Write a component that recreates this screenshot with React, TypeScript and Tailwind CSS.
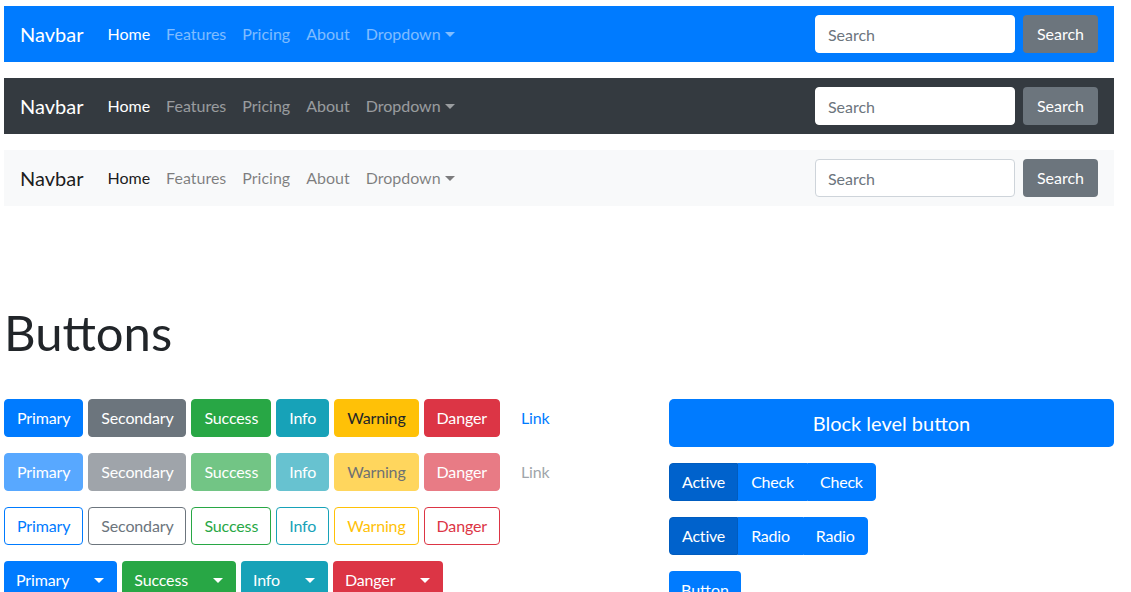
import React from "react"

type NavVariant = {
  bg: string
  brand: string
  link: string
  active: string
  input: string
}

const navVariants: NavVariant[] = [
  { bg: "bg-[#007bff]", brand: "text-white", link: "text-white/50", active: "text-white", input: "border-white" },
  { bg: "bg-[#343a40]", brand: "text-white", link: "text-white/50", active: "text-white", input: "border-white" },
  { bg: "bg-[#f8f9fa]", brand: "text-black/90", link: "text-black/50", active: "text-black/90", input: "border-[#ced4da]" },
]

function Caret({ className = "" }: { className?: string }) {
  return (
    <span
      className={
        "inline-block w-0 h-0 border-t-[5px] border-x-[5px] border-b-0 border-x-transparent border-t-current align-middle " +
        className
      }
    />
  )
}

function Navbar({ v }: { v: NavVariant }) {
  const links = ["Features", "Pricing", "About"]
  return (
    <nav className={"flex items-center h-[56px] px-4 " + v.bg}>
      <a className={"text-[20px] leading-[30px] mr-4 " + v.brand}>Navbar</a>
      <ul className="flex items-center">
        <li className={"px-2 py-2 leading-6 " + v.active}>Home</li>
        {links.map(l => (
          <li key={l} className={"px-2 py-2 leading-6 " + v.link}>{l}</li>
        ))}
        <li className={"px-2 py-2 leading-6 flex items-center " + v.link}>
          Dropdown
          <Caret className="ml-[4px]" />
        </li>
      </ul>
      <form className="ml-auto flex items-center">
        <input
          placeholder="Search"
          className={"w-[200px] h-[38px] rounded-[4px] border bg-white px-3 text-base text-[#495057] placeholder:text-[#6c757d] outline-none " + v.input}
        />
        <button type="button" className="ml-2 h-[38px] px-[14px] rounded-[4px] bg-[#6c757d] text-white leading-6">
          Search
        </button>
      </form>
    </nav>
  )
}

const solid = [
  { label: "Primary", cls: "bg-[#007bff] border-[#007bff] text-white" },
  { label: "Secondary", cls: "bg-[#6c757d] border-[#6c757d] text-white" },
  { label: "Success", cls: "bg-[#28a745] border-[#28a745] text-white" },
  { label: "Info", cls: "bg-[#17a2b8] border-[#17a2b8] text-white" },
  { label: "Warning", cls: "bg-[#ffc107] border-[#ffc107] text-[#212529]" },
  { label: "Danger", cls: "bg-[#dc3545] border-[#dc3545] text-white" },
]

const outline = [
  { label: "Primary", cls: "border-[#007bff] text-[#007bff]" },
  { label: "Secondary", cls: "border-[#6c757d] text-[#6c757d]" },
  { label: "Success", cls: "border-[#28a745] text-[#28a745]" },
  { label: "Info", cls: "border-[#17a2b8] text-[#17a2b8]" },
  { label: "Warning", cls: "border-[#ffc107] text-[#ffc107]" },
  { label: "Danger", cls: "border-[#dc3545] text-[#dc3545]" },
]

const split = [
  { label: "Primary", cls: "bg-[#007bff] text-white" },
  { label: "Success", cls: "bg-[#28a745] text-white" },
  { label: "Info", cls: "bg-[#17a2b8] text-white" },
  { label: "Danger", cls: "bg-[#dc3545] text-white" },
]

const btn = "h-[38px] px-3 border rounded-[4px] leading-6 flex items-center"

function Group({ items }: { items: string[] }) {
  return (
    <div className="flex tracking-[-0.2px]">
      {items.map((t, i) => (
        <span
          key={i}
          className={
            "h-[38px] px-3 flex items-center text-white border " +
            (i === 0 ? "rounded-l-[4px] bg-[#0062cc] border-[#005cbf]" : "bg-[#007bff] border-[#007bff]") +
            (i === items.length - 1 ? " rounded-r-[4px]" : "")
          }
        >
          {t}
        </span>
      ))}
    </div>
  )
}

export default function App() {
  return (
    <div className="min-h-screen bg-white font-['Lato',sans-serif] text-base text-[#212529] overflow-hidden">
      <div className="ml-[4px] w-[1110px] pt-[6px]">
        <div className="flex flex-col gap-4">
          {navVariants.map((v, i) => (
            <Navbar key={i} v={v} />
          ))}
        </div>

        <h1 className="mt-[97px] mb-[38px] text-[49px] leading-[58px] font-normal">Buttons</h1>

        <div className="flex">
          {/* left column */}
          <div className="w-[665px] flex flex-col gap-4 tracking-[-0.15px]">
            <div className="flex gap-[5px]">
              {solid.map(b => (
                <span key={b.label} className={btn + " " + b.cls}>{b.label}</span>
              ))}
              <span className="h-[38px] px-3 flex items-center text-[#007bff] ml-[4px]">Link</span>
            </div>
            <div className="flex gap-[5px]">
              {solid.map(b => (
                <span key={b.label} className={btn + " opacity-65 " + b.cls}>{b.label}</span>
              ))}
              <span className="h-[38px] px-3 flex items-center text-[#6c757d] opacity-65 ml-[4px]">Link</span>
            </div>
            <div className="flex gap-[5px]">
              {outline.map(b => (
                <span key={b.label} className={btn + " " + b.cls}>{b.label}</span>
              ))}
            </div>
            <div className="flex gap-[5px]">
              {split.map(b => (
                <div key={b.label} className={"flex h-[38px] rounded-[4px] " + b.cls}>
                  <span className="px-3 flex items-center">{b.label}</span>
                  <span className="px-[13px] flex items-center">
                    <Caret />
                  </span>
                </div>
              ))}
            </div>
          </div>

          {/* right column */}
          <div className="flex-1 flex flex-col gap-4 items-start">
            <span className="w-full h-[48px] rounded-[5px] bg-[#007bff] text-white text-[20px] flex items-center justify-center">
              Block level button
            </span>
            <Group items={["Active", "Check", "Check"]} />
            <Group items={["Active", "Radio", "Radio"]} />
            <span className="h-[38px] px-3 rounded-[4px] bg-[#007bff] text-white flex items-center">Button</span>
          </div>
        </div>
      </div>
    </div>
  )
}
